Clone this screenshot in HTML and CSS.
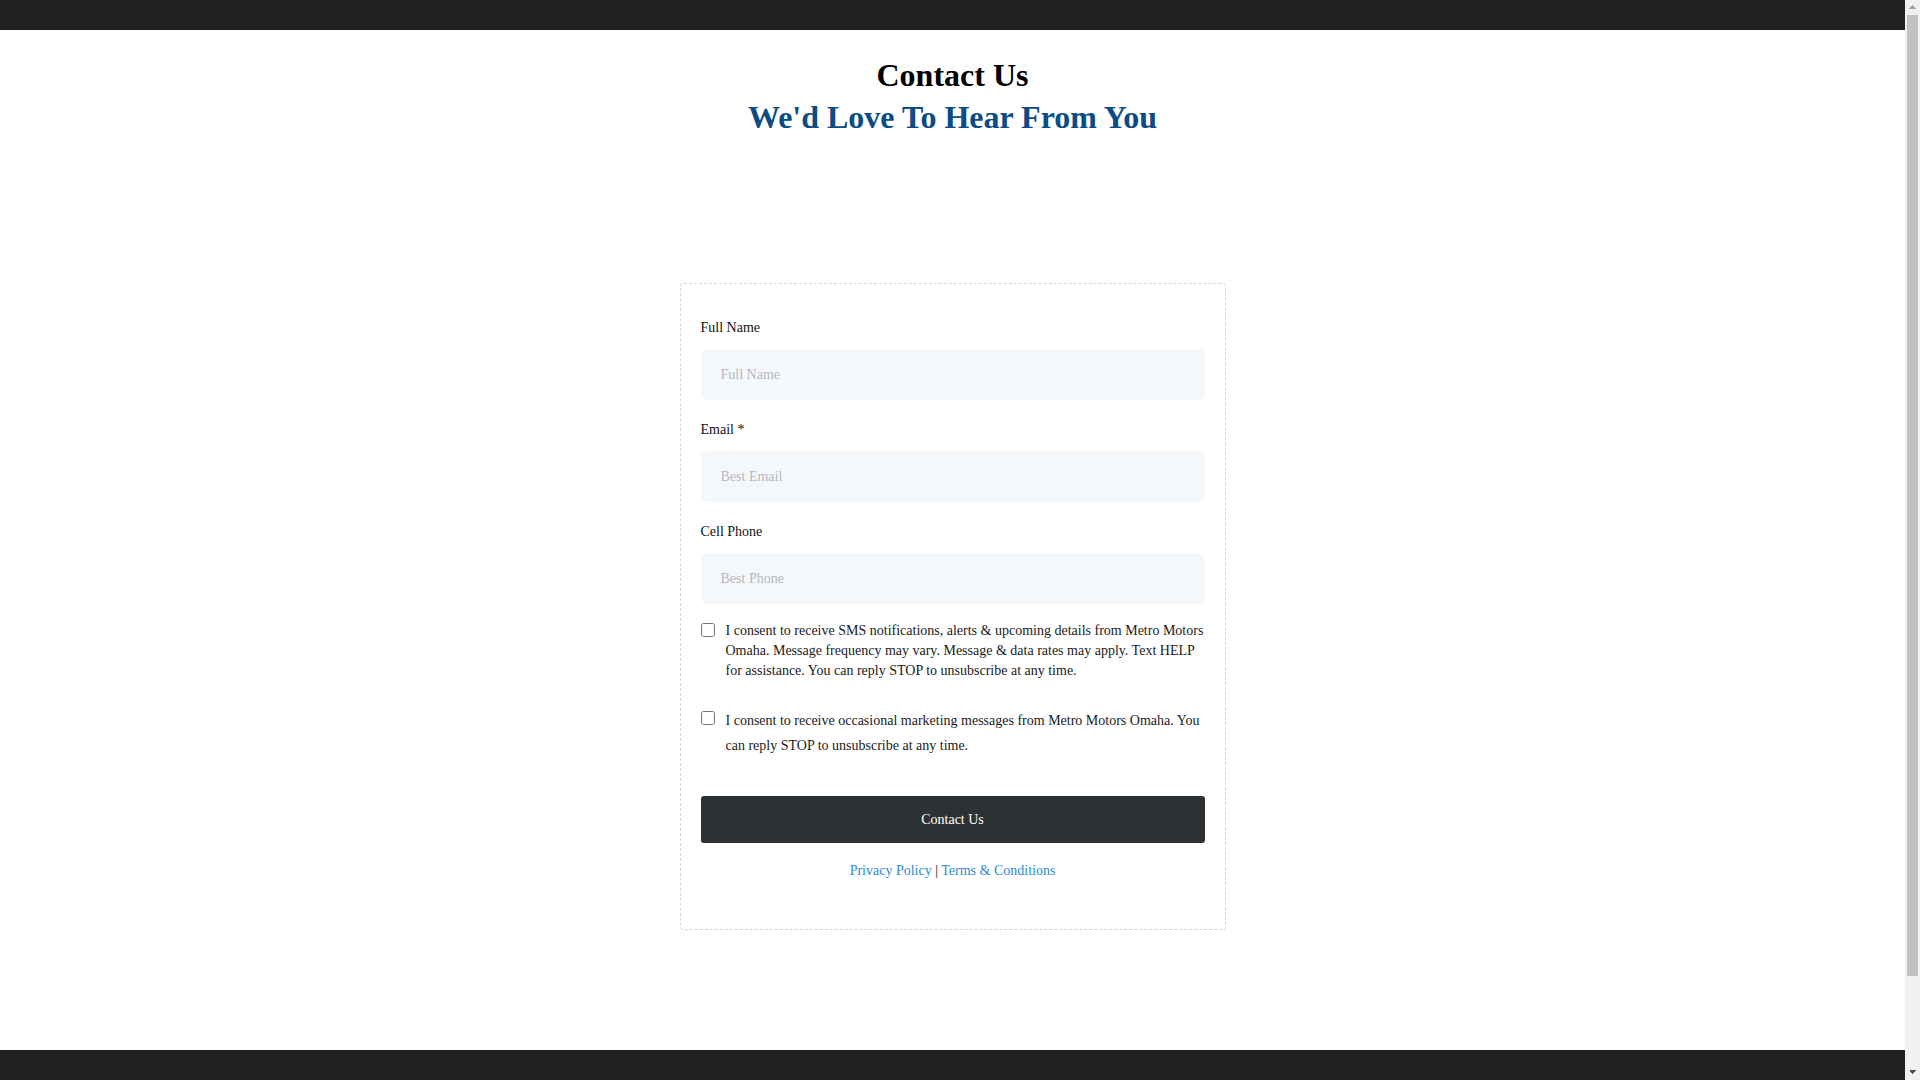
FILE: index.html
```html
<!DOCTYPE html>
<html lang="en">
<head>
<meta charset="utf-8">
<title>Contact Us</title>
<link rel="stylesheet" href="styles.css">
</head>
<body>
<header class="topbar"></header>
<main class="page">
  <section class="intro">
    <h1 class="title">Contact Us</h1>
    <h2 class="subtitle">We'd Love To Hear From You</h2>
  </section>
  <form class="card">
    <div class="field">
      <label class="label" for="name">Full Name</label>
      <input class="input" id="name" type="text" placeholder="Full Name">
    </div>
    <div class="field">
      <label class="label" for="email">Email *</label>
      <input class="input" id="email" type="email" placeholder="Best Email">
    </div>
    <div class="field field-last">
      <label class="label" for="phone">Cell Phone</label>
      <input class="input" id="phone" type="tel" placeholder="Best Phone">
    </div>
    <div class="consent consent-sms">
      <input class="check" type="checkbox">
      <p class="consent-text">I consent to receive SMS notifications, alerts &amp; upcoming details from Metro Motors Omaha. Message frequency may vary. Message &amp; data rates may apply. Text HELP for assistance. You can reply STOP to unsubscribe at any time.</p>
    </div>
    <div class="consent consent-marketing">
      <input class="check" type="checkbox">
      <p class="consent-text">I consent to receive occasional marketing messages from Metro Motors Omaha. You can reply STOP to unsubscribe at any time.</p>
    </div>
    <button class="submit" type="button">Contact Us</button>
    <p class="links"><a href="#" class="link">Privacy Policy</a> | <a href="#" class="link">Terms &amp; Conditions</a></p>
  </form>
</main>
<footer class="bottombar"></footer>
</body>
</html>
```

FILE: styles.css
```css
* { box-sizing: border-box; }

/* the page's scroll gutter: arrows, thumb and track */
html {
  margin: 0;
  padding: 0;
  background-color: #f1f1f1;
  background-image:
    linear-gradient(to bottom right, transparent 50%, #a3a3a3 50%),
    linear-gradient(to bottom left, transparent 50%, #a3a3a3 50%),
    linear-gradient(to top right, transparent 50%, #505050 50%),
    linear-gradient(to top left, transparent 50%, #505050 50%),
    linear-gradient(#c1c1c1, #c1c1c1);
  background-repeat: no-repeat;
  background-size: 4px 4px, 4px 4px, 4px 4px, 4px 4px, 11px 961px;
  background-position:
    right 7px top 5px,
    right 3px top 5px,
    right 7px bottom 6px,
    right 3px bottom 6px,
    right 2px top 15px;
  background-attachment: fixed, fixed, fixed, fixed, scroll;
}

body {
  margin: 0 15px 0 0;
  padding: 0;
  background: #ffffff;
  font-family: "Liberation Serif", "Times New Roman", serif;
  color: #1a1a1a;
}

.topbar {
  height: 30px;
  background: #222222;
}

.page {
  display: flex;
  flex-direction: column;
  align-items: center;
}

.intro {
  margin-top: 25px;
  text-align: center;
}

.title {
  margin: 0;
  font-size: 32px;
  line-height: 41px;
  font-weight: bold;
  color: #000000;
}

.subtitle {
  margin: 1px 0 0;
  font-size: 32px;
  line-height: 41px;
  font-weight: bold;
  color: #0b4c85;
}

.card {
  width: 546px;
  margin: 145px 0 120px;
  padding: 35px 20px 48px;
  border: 1px dashed #c6dbe9;
  border-radius: 4px;
  display: flex;
  flex-direction: column;
}

.field {
  display: flex;
  flex-direction: column;
  margin-bottom: 21px;
}

.field-last { margin-bottom: 0; }

.label {
  font-size: 14px;
  line-height: 18px;
  margin-bottom: 12px;
  color: #111111;
}

.input {
  height: 51px;
  border: none;
  border-radius: 6px;
  background: #f5f8fb;
  padding: 0 20px;
  font-family: "Liberation Serif", "Times New Roman", serif;
  font-size: 14px;
  color: #222222;
  outline: none;
}

.input::placeholder { color: #b3b8bd; }

.consent {
  display: flex;
  align-items: flex-start;
  gap: 11px;
}

.consent-sms { margin-top: 17px; }
.consent-marketing { margin-top: 27px; }

.check {
  width: 14px;
  height: 14px;
  margin: 2px 0 0 0;
  flex: 0 0 14px;
}

.consent-text {
  margin: 0;
  font-size: 14px;
  line-height: 20px;
  color: #1a1a1a;
}

.consent-marketing .consent-text { line-height: 25px; }
.consent-marketing .check { margin-top: 3px; }

.submit {
  margin-top: 38px;
  height: 47px;
  border: none;
  border-radius: 3px;
  background: #2c3135;
  color: #ffffff;
  font-family: "Liberation Serif", "Times New Roman", serif;
  font-size: 14px;
}

.links {
  margin: 18px 0 0;
  text-align: center;
  font-size: 14px;
  line-height: 20px;
  color: #111111;
}

.link {
  color: #2a8ad8;
  text-decoration: none;
}

.bottombar {
  height: 130px;
  background: #222222;
}
```
